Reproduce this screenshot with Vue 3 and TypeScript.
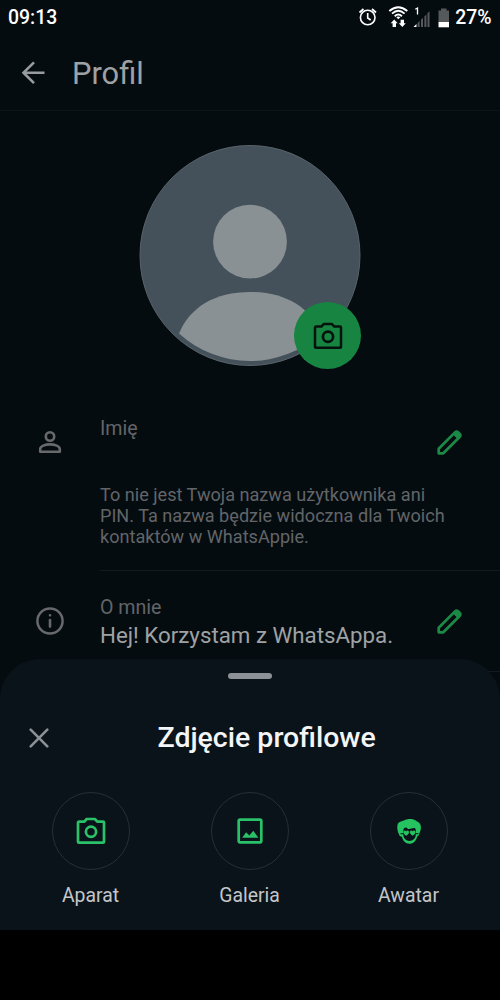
<script setup lang="ts">
interface ProfileRow {
  id: string
  icon: 'person' | 'info'
  label: string
  value?: string
  hint?: string[]
}

interface PhotoSource {
  id: 'camera' | 'gallery' | 'avatar'
  label: string
}

const rows: ProfileRow[] = [
  {
    id: 'name',
    icon: 'person',
    label: 'Imię',
    hint: [
      'To nie jest Twoja nazwa użytkownika ani',
      'PIN. Ta nazwa będzie widoczna dla Twoich',
      'kontaktów w WhatsAppie.',
    ],
  },
  { id: 'about', icon: 'info', label: 'O mnie', value: 'Hej! Korzystam z WhatsAppa.' },
]

const sources: PhotoSource[] = [
  { id: 'camera', label: 'Aparat' },
  { id: 'gallery', label: 'Galeria' },
  { id: 'avatar', label: 'Awatar' },
]
</script>

<template>
  <div class="screen">
    <header class="status">
      <span class="clock">09:13</span>
      <svg class="status-icons" width="94" height="26" viewBox="0 0 94 26">
        <g fill="none" stroke="#fff" stroke-width="1.6">
          <circle cx="12.7" cy="12.5" r="7.3" />
          <path d="M12.700 8v5l3 2" />
          <path d="M4.500 7.500 8.500 4M21 7.500 17 4" stroke-width="1.800" />
        </g>
        <g fill="none" stroke="#fff" stroke-width="1.900">
          <path d="M34.300 6Q43.300-1.600 52.300 6" />
          <path d="M37 8.600Q43.300 3 49.600 8.600" />
          <path d="M39.700 11.200Q43.300 7.800 46.900 11.200" />
        </g>
        <path d="M41.300 12.300Q43.300 10.700 45.300 12.300L43.300 14.300z" fill="#fff" />
        <path d="m39.200 14.600 3.500 3.700H41v3.700h-3.400v-3.700h-1.900zM47.300 22l-3.500-3.700h1.800v-3.500H49v3.500h1.800z" fill="#fff" />
        <path d="M60.300 4.200l2.200-1.200v6.500" fill="none" stroke="#fff" stroke-width="1.300" />
        <path d="M58.500 22h3v-3z" fill="#fff" />
        <path d="M62.600 18l2-2v6h-2zM66 14.800l2-2V22h-2zM69.400 11.400l2-2V22h-2zM72.500 8.200l2-2V22h-2z" fill="#56595b" />
        <path d="M83.500 5.500H86V3.500h5.500v2H94V17H83.500z" fill="#56595b" />
        <path d="M83.500 17H94v5.300H83.500z" fill="#fff" />
      </svg>
      <span class="percent">27%</span>
    </header>

    <div class="appbar">
      <svg class="back" width="24" height="24" viewBox="0 0 24 24">
        <path d="M23.500 11.700H2.500M13 1.300 2.500 11.700 13 22.100" fill="none" stroke="#999c9e" stroke-width="2.600" />
      </svg>
      <h1>Profil</h1>
    </div>

    <div class="photo">
      <svg width="222" height="226" viewBox="139 144 222 226">
        <circle cx="250" cy="255.500" r="110" fill="#44515a" stroke="#59636a" stroke-width="1" />
        <circle cx="250" cy="241.700" r="36.900" fill="#8a9194" />
        <path
          d="M179 333.500C190 307 215 292 250 292S310 307 321 333.500A105.500 105.500 0 0 1 179 333.500z"
          fill="#8a9194"
        />
      </svg>
      <button class="badge" aria-label="Zmień">
        <svg width="30" height="28" viewBox="0 0 30 28" fill="none" stroke="#05130c">
          <path
            d="M3 4.600h5.400L10.700 2h8.200l2.400 2.600H27a1 1 0 0 1 1 1v19.100a1 1 0 0 1-1 1H3a1 1 0 0 1-1-1V5.600a1 1 0 0 1 1-1z"
            stroke-width="2.500"
            stroke-linejoin="round"
          />
          <circle cx="15" cy="14.800" r="5.100" stroke-width="2.700" />
        </svg>
      </button>
    </div>

    <section v-for="row in rows" :key="row.id" class="row" :class="row.id">
      <div class="lead">
        <svg v-if="row.icon === 'person'" width="30" height="30" viewBox="0 0 30 30" fill="none" stroke="#67696b" stroke-width="2.600">
          <circle cx="15" cy="9.500" r="4.200" />
          <path d="M5.200 24.700v-2.600c0-3 5-4.700 9.800-4.700s9.800 1.700 9.800 4.700v2.600z" stroke-linejoin="round" />
        </svg>
        <svg v-else width="30" height="30" viewBox="0 0 30 30" fill="none" stroke="#67696b" stroke-width="2.500">
          <circle cx="15" cy="15" r="12.600" />
          <path d="M15 14v6.600M15 9.200v.1" stroke-linecap="round" stroke-width="2.600" />
        </svg>
      </div>
      <div class="body">
        <div class="label">{{ row.label }}</div>
        <div v-if="row.value" class="value">{{ row.value }}</div>
        <div v-if="row.hint" class="hint">
          <div v-for="line in row.hint" :key="line">{{ line }}</div>
        </div>
      </div>
      <svg class="pen" width="28" height="28" viewBox="0 0 28 28">
        <path
          d="M2.700 20.700 19 4.400a2.300 2.300 0 0 1 3.200 0l1.400 1.400a2.300 2.300 0 0 1 0 3.200L7.300 25.300H2.700z"
          fill="none"
          stroke="#1c8a47"
          stroke-width="2.700"
          stroke-linejoin="round"
        />
        <path d="m16.900 6.400 2.500-2.500a2 2 0 0 1 2.800 0l1.900 1.900a2 2 0 0 1 0 2.800l-2.500 2.500z" fill="#1c8a47" />
      </svg>
    </section>

    <div class="sheet">
      <div class="handle"></div>
      <div class="sheet-head">
        <svg class="close" width="20" height="20" viewBox="0 0 20 20">
          <path d="m1.700 1.700 16.600 16.600m0-16.600L1.700 18.300" stroke="#8b9196" stroke-width="2.600" stroke-linecap="round" />
        </svg>
        <h2>Zdjęcie profilowe</h2>
      </div>
      <div class="sources">
        <div v-for="source in sources" :key="source.id" class="source">
          <div class="ring">
            <svg v-if="source.id === 'camera'" width="30" height="28" viewBox="0 0 30 28" fill="none" stroke="#2bc168">
              <path
                d="M3 4.600h5.400L10.700 2h8.200l2.400 2.600H27a1 1 0 0 1 1 1v19.100a1 1 0 0 1-1 1H3a1 1 0 0 1-1-1V5.600a1 1 0 0 1 1-1z"
                stroke-width="2.700"
                stroke-linejoin="round"
              />
              <circle cx="15" cy="14.800" r="5.100" stroke-width="2.700" />
            </svg>
            <svg v-else-if="source.id === 'gallery'" width="28" height="28" viewBox="0 0 28 28">
              <rect x="2.700" y="2.700" width="22.600" height="22.600" rx="1.200" fill="none" stroke="#2bc168" stroke-width="2.700" />
              <path d="m6.200 20.700 3.900-5.400 3.200 3.300 4-4.800 5.100 6.900z" fill="#2bc168" />
            </svg>
            <svg v-else width="28" height="28" viewBox="0 0 28 28">
              <path
                d="M4 17.200C2.400 14.500 1.800 10 2.600 7.500 3.600 4.600 6.500 4.200 9 3.400c3.600-1.900 9-2.100 12.300.5 3.400 1.500 4.900 3.900 4.600 6.800-.1 2.300-.7 3.800-1.500 5.500-.2 1.700-1 2.800-2.200 3.200-.9 4.400-4 7.300-7.800 7.300s-6.600-2.900-7.500-7c-1.500-.2-2.700-1-2.900-2.500z"
                fill="#25c461"
              />
              <path
                d="M8.300 13.500c.2-2 1-3 2.600-3 1.400.2 1.500 1.700 3.200 1.600 1.900-.1 3.500-1.300 5.700-1 .7.700 1 1.400 1 2.400v4.200c-.4 4-3 6.200-6.300 6.200s-5.800-2.200-6.200-6.200z"
                fill="#0b131a"
              />
              <path
                d="M11.200 18.700c-2-1.500-3.100-2.600-2.700-4 .5-1.300 2-1.500 2.700-.3.700-1.200 2.300-1 2.800.3.400 1.400-.8 2.500-2.800 4zM17.700 18.700c-2-1.500-3.200-2.600-2.800-4 .5-1.300 2.100-1.500 2.800-.3.700-1.200 2.200-1 2.700.3.400 1.400-.7 2.500-2.700 4z"
                fill="#25c461"
              />
              <path d="M5.500 16.700h3M20.500 16.700h3" stroke="#0b131a" stroke-width="1" />
            </svg>
          </div>
          <span>{{ source.label }}</span>
        </div>
      </div>
    </div>
    <div class="navbar"></div>
  </div>
</template>

<style>
body {
  margin: 0;
  background: #000;
}
</style>

<style scoped>
.screen {
  position: relative;
  width: 500px;
  height: 1000px;
  overflow: hidden;
  background: #050c10;
  font-family: Roboto, sans-serif;
  color: #9fa2a4;
}
.status {
  display: flex;
  align-items: center;
  height: 36px;
  padding: 0 8.500px 0 8px;
  color: #fff;
  font-size: 19.400px;
  font-weight: 500;
}
.clock {
  flex: 1;
}
.clock,
.percent {
  margin-top: -2px;
}
.status-icons {
  margin: 0 6.500px 0 0;
}
.appbar {
  display: flex;
  align-items: center;
  box-sizing: border-box;
  height: 75px;
  padding-left: 21px;
  border-bottom: 1px solid #0d1418;
}
h1,
h2 {
  margin: 0;
}
h1 {
  margin-left: 27px;
  font-size: 30.800px;
  font-weight: 400;
}
.photo {
  position: relative;
  width: 222px;
  height: 226px;
  margin: 33px auto 0;
}
.photo > svg {
  display: block;
}
.badge {
  position: absolute;
  top: 158.400px;
  left: 155px;
  display: flex;
  align-items: center;
  justify-content: center;
  width: 67px;
  height: 67px;
  padding: 0;
  border: 0;
  border-radius: 50%;
  background: #178442;
}
.row {
  display: flex;
  align-items: flex-start;
}
.row.name {
  height: 154px;
  padding-top: 46px;
}
.row.about {
  height: 77px;
  padding-top: 25px;
}
.lead {
  width: 65px;
  padding: 11px 0 0 35px;
}
.body {
  position: relative;
  flex: 1;
  width: 0;
  white-space: nowrap;
  border-bottom: 1px solid #141b1f;
}
.name .body {
  height: 154px;
}
.about .body {
  height: 76px;
}
.label {
  height: 25px;
  color: #626568;
  font-size: 19.600px;
  line-height: 26px;
}
.value {
  font-size: 22.300px;
  line-height: 30px;
}
.hint {
  padding-top: 43px;
  color: #626568;
  font-size: 18.120px;
  line-height: 21.200px;
}
.pen {
  margin: 12px 36px 0 -64px;
}
.sheet {
  position: absolute;
  top: 659px;
  left: 0;
  width: 500px;
  height: 271px;
  border-radius: 40px 40px 0 0;
  background: #0b131a;
}
.handle {
  width: 44px;
  height: 6px;
  margin: 14px auto 0;
  border-radius: 3px;
  background: #8b9196;
}
.sheet-head {
  display: flex;
  align-items: center;
  height: 40px;
  margin-top: 39px;
  padding-left: 29px;
}
h2 {
  margin-top: -1px;
  margin-left: 108.500px;
  color: #f3f5f6;
  font-size: 28.500px;
  font-weight: 500;
  white-space: nowrap;
}
.sources {
  display: flex;
  justify-content: space-between;
  margin: 34px 42px 0 41px;
}
.source {
  display: flex;
  flex-direction: column;
  align-items: center;
  width: 99px;
  color: #c3c6c9;
  font-size: 19.400px;
  line-height: 24px;
}
.ring {
  display: flex;
  align-items: center;
  justify-content: center;
  box-sizing: border-box;
  width: 78px;
  height: 78px;
  margin-bottom: 14px;
  border: 1px solid #272e34;
  border-radius: 50%;
}
.navbar {
  position: absolute;
  bottom: 0;
  left: 0;
  width: 500px;
  height: 70px;
  background: #000;
}
</style>
